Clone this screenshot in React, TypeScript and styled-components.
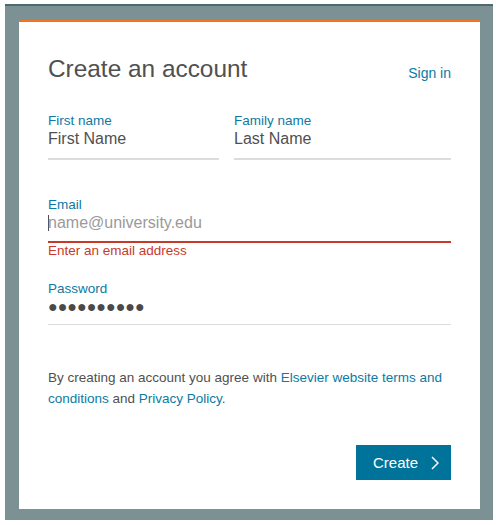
import React from "react";
import styled, { createGlobalStyle } from "styled-components";

const Global = createGlobalStyle`
  html, body { margin: 0; padding: 0; background: #ffffff; }
  body { font-family: "Liberation Sans", Arial, sans-serif; }
  * { box-sizing: border-box; }
`;

const Frame = styled.div`
  margin: 4px 0 0 5px;
  width: 488px;
  background: #7b9193;
  border-top: 2px solid #4c6a70;
  padding: 14px 13px 11px 14px;
`;

const Card = styled.div`
  background: #ffffff;
  border-top: 2px solid #ee7421;
  padding: 33px 29px 29px 29px;
  display: flex;
  flex-direction: column;
`;

const Header = styled.div`
  display: flex;
  justify-content: space-between;
  align-items: flex-end;
`;

const Title = styled.h1`
  margin: 0;
  font-size: 24.4px;
  line-height: 28px;
  font-weight: 400;
  color: #505050;
`;

const Link = styled.a`
  color: #0c7aa3;
  text-decoration: none;
  cursor: pointer;
`;

const SignIn = styled(Link)`
  font-size: 14px;
  line-height: 16px;
  margin-bottom: 2px;
`;

const NameRow = styled.div`
  display: grid;
  grid-template-columns: 171px 1fr;
  column-gap: 15px;
  margin-top: 30px;
`;

const Field = styled.div<{ $top?: number }>`
  display: flex;
  flex-direction: column;
  margin-top: ${(p) => p.$top ?? 0}px;
`;

const Label = styled.label`
  font-size: 13.5px;
  line-height: 16px;
  color: #0c7aa3;
`;

const Value = styled.div<{ $line: "name" | "error" | "plain"; $pb: number; $muted?: boolean }>`
  font-size: 16px;
  line-height: 19px;
  height: ${(p) => 19 + p.$pb + (p.$line === "plain" ? 1 : 2)}px;
  color: ${(p) => (p.$muted ? "#9a9a9a" : "#505050")};
  padding-bottom: ${(p) => p.$pb}px;
  border-bottom: ${(p) =>
    p.$line === "name"
      ? "2px solid #dcdcdc"
      : p.$line === "error"
      ? "2px solid #c9392a"
      : "1px solid #dcdcdc"};
  white-space: nowrap;
  display: flex;
  align-items: center;
`;

const Caret = styled.span`
  display: inline-block;
  width: 1px;
  height: 16px;
  background: #505050;
  margin-right: -1px;
  align-self: center;
`;

const Dots = styled.span`
  font-family: "Liberation Sans", "DejaVu Sans", sans-serif;
  font-size: 16px;
  color: #4a4a4a;
  letter-spacing: 0;
`;

const ErrorText = styled.div`
  font-size: 13.5px;
  line-height: 15px;
  color: #c9392a;
`;

const Notice = styled.div`
  margin-top: 42px;
  font-size: 13.5px;
  line-height: 21px;
  color: #505050;
  display: flex;
  flex-direction: column;
`;

const NoticeLine = styled.div`
  white-space: nowrap;
`;

const Actions = styled.div`
  display: flex;
  justify-content: flex-end;
  margin-top: 36px;
`;

const Button = styled.button`
  height: 35px;
  width: 95px;
  border: none;
  background: #00739a;
  color: #ffffff;
  font-family: "Liberation Sans", Arial, sans-serif;
  font-size: 15px;
  padding: 0 12px 0 17px;
  display: flex;
  align-items: center;
  gap: 13px;
  cursor: pointer;
`;

export default function App() {
  return (
    <>
      <Global />
      <Frame>
        <Card>
          <Header>
            <Title>Create an account</Title>
            <SignIn>Sign in</SignIn>
          </Header>
          <NameRow>
            <Field>
              <Label>First name</Label>
              <Value $line="name" $pb={10}>First Name</Value>
            </Field>
            <Field>
              <Label>Family name</Label>
              <Value $line="name" $pb={10}>Last Name</Value>
            </Field>
          </NameRow>
          <Field $top={37}>
            <Label>Email</Label>
            <Value $line="error" $pb={9} $muted>
              <Caret />
              name@university.edu
            </Value>
            <ErrorText>Enter an email address</ErrorText>
          </Field>
          <Field $top={23}>
            <Label>Password</Label>
            <Value $line="plain" $pb={8}>
              <Dots>●●●●●●●●●●</Dots>
            </Value>
          </Field>
          <Notice>
            <NoticeLine>
              By creating an account you agree with <Link>Elsevier website terms and</Link>
            </NoticeLine>
            <NoticeLine>
              <Link>conditions</Link> and <Link>Privacy Policy</Link>.
            </NoticeLine>
          </Notice>
          <Actions>
            <Button>
              Create
              <svg width="8" height="14" viewBox="0 0 8 14" fill="none">
                <path d="M1 1 L7 7 L1 13" stroke="#ffffff" strokeWidth="1.5" />
              </svg>
            </Button>
          </Actions>
        </Card>
      </Frame>
    </>
  );
}
